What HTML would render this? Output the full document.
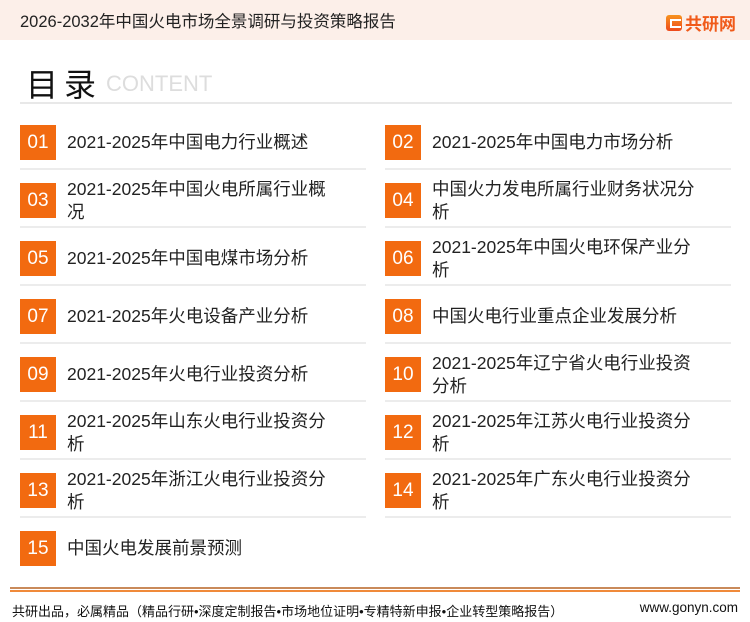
<!DOCTYPE html>
<html><head><meta charset="utf-8"><style>
*{margin:0;padding:0;box-sizing:border-box}
body{width:750px;height:622px;background:#fff;font-family:"Liberation Sans","Noto Sans CJK SC",sans-serif;position:relative;overflow:hidden;color:#222}
.hdr{position:absolute;left:0;top:0;width:750px;height:40px;background:#fcefe9}
.hdr .t{position:absolute;left:20px;top:8px;font-size:16.5px;color:#222}
.logo{position:absolute;left:666px;top:10px;font-size:17px;font-weight:bold;color:#f05a1a;display:flex;align-items:center}
.logo i{display:inline-block;width:16px;height:16px;background:linear-gradient(#f7931e,#ee4a1c);border-radius:3px;margin-right:3px;position:relative}
.logo i:after{content:"";position:absolute;left:4px;top:4px;width:9px;height:5px;border:2px solid #fff;border-right:none}
.ml{position:absolute;left:26px;top:60px;font-size:32px;color:#111;letter-spacing:6px}
.ct{position:absolute;left:106px;top:71px;font-size:22px;color:#ddd}
.hl{position:absolute;left:20px;top:102px;width:712px;height:2px;background:#e8e8e8}
.row{position:absolute;width:346px;height:58px;border-bottom:2px solid #ececec}
.row b{position:absolute;left:0;top:13px;width:36px;height:35px;background:#f26a10;color:#fff;font-weight:normal;font-size:19px;text-align:center;line-height:35px}
.row span{position:absolute;left:47px;font-size:17.5px;line-height:23px;width:271px}
.row span.one{top:19px}
.row span.two{top:8px}
.fl1{position:absolute;left:10px;top:587px;width:730px;height:2px;background:#c98a5a}
.fl2{position:absolute;left:10px;top:590px;width:730px;height:2px;background:#f08a3a}
.ft{position:absolute;left:12px;top:601px;font-size:13px;color:#111}
.fr{position:absolute;right:12px;top:600px;font-size:13.5px;color:#111}
</style></head><body>
<div class="hdr"><div class="t">2026-2032年中国火电市场全景调研与投资策略报告</div>
<div class="logo"><i></i>共研网</div></div>
<div class="ml">目录</div><div class="ct">CONTENT</div>
<div class="hl"></div>

<div class="row" style="left:20px;top:112px"><b>01</b><span class="one">2021-2025年中国电力行业概述</span></div>
<div class="row" style="left:385px;top:112px"><b>02</b><span class="one">2021-2025年中国电力市场分析</span></div>
<div class="row" style="left:20px;top:170px"><b>03</b><span class="two">2021-2025年中国火电所属行业概况</span></div>
<div class="row" style="left:385px;top:170px"><b>04</b><span class="two">中国火力发电所属行业财务状况分析</span></div>
<div class="row" style="left:20px;top:228px"><b>05</b><span class="one">2021-2025年中国电煤市场分析</span></div>
<div class="row" style="left:385px;top:228px"><b>06</b><span class="two">2021-2025年中国火电环保产业分析</span></div>
<div class="row" style="left:20px;top:286px"><b>07</b><span class="one">2021-2025年火电设备产业分析</span></div>
<div class="row" style="left:385px;top:286px"><b>08</b><span class="one">中国火电行业重点企业发展分析</span></div>
<div class="row" style="left:20px;top:344px"><b>09</b><span class="one">2021-2025年火电行业投资分析</span></div>
<div class="row" style="left:385px;top:344px"><b>10</b><span class="two">2021-2025年辽宁省火电行业投资分析</span></div>
<div class="row" style="left:20px;top:402px"><b>11</b><span class="two">2021-2025年山东火电行业投资分析</span></div>
<div class="row" style="left:385px;top:402px"><b>12</b><span class="two">2021-2025年江苏火电行业投资分析</span></div>
<div class="row" style="left:20px;top:460px"><b>13</b><span class="two">2021-2025年浙江火电行业投资分析</span></div>
<div class="row" style="left:385px;top:460px"><b>14</b><span class="two">2021-2025年广东火电行业投资分析</span></div>
<div class="row" style="left:20px;top:518px;border-bottom:none"><b>15</b><span class="one">中国火电发展前景预测</span></div>

<div class="fl1"></div><div class="fl2"></div>
<div class="ft">共研出品，必属精品（精品行研•深度定制报告•市场地位证明•专精特新申报•企业转型策略报告）</div>
<div class="fr">www.gonyn.com</div>
</body></html>
